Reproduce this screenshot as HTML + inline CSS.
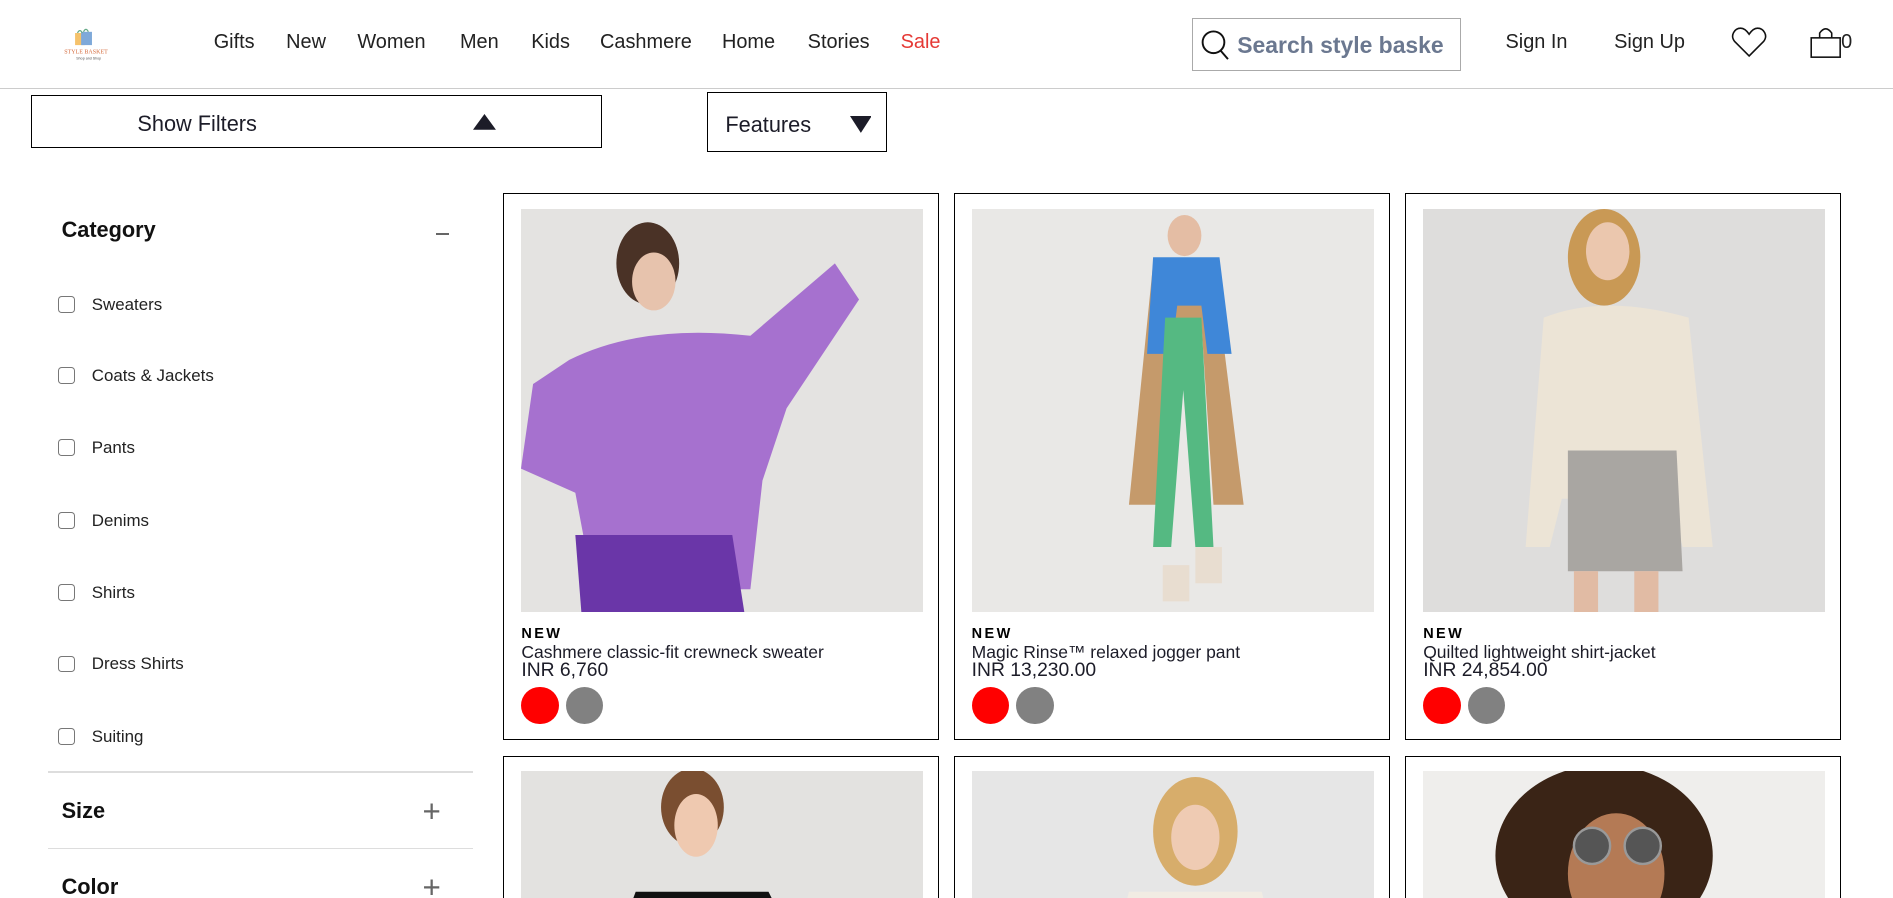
<!DOCTYPE html>
<html><head><meta charset="utf-8"><style>
*{margin:0;padding:0;box-sizing:border-box}
html,body{width:1893px;height:898px;overflow:hidden;background:#fff}
#w{zoom:1.2073;width:1568px;height:744px;position:relative;overflow:hidden;font-family:"Liberation Sans",sans-serif;color:#1c1c28}
.a{position:absolute;white-space:nowrap}
.nav{top:26px;font-size:16.5px;color:#222}
.box{position:absolute;border:1px solid #000}
.cb{position:absolute;left:48px;width:14px;height:14px;border:1px solid #777;border-radius:3px}
.lab{position:absolute;left:76px;font-size:14px;color:#222}
.card{position:absolute;width:361px;border:1px solid #000;background:#fff}
.img{position:absolute;left:14px;top:12px;width:333px;height:334px;background:#e4e3e1;overflow:hidden}
.new{position:absolute;left:14px;top:358px;font-size:12px;font-weight:bold;letter-spacing:2px;color:#000}
.tt{position:absolute;left:14px;top:371px;font-size:14.5px}
.pr{position:absolute;left:14px;top:386px;font-size:16px}
.sw{position:absolute;top:408px;width:31px;height:31px;border-radius:50%}
</style></head><body><div id="w">
<div style="position:absolute;left:0;top:73px;width:1568px;height:1px;background:#ccc"></div>
<svg class="a" style="left:52px;top:22px" width="40" height="32" viewBox="0 0 40 32"><rect x="10" y="5" width="8" height="10" fill="#f5c26b"/><rect x="15" y="4" width="9" height="11" fill="#7fa9d9"/><path d="M12 5q2-4 4 0M17 4q2-4 4 0" stroke="#6a8" fill="none"/><text x="1" y="22" font-size="5" fill="#d4693a" font-family="Liberation Serif">STYLE BASKET</text><text x="11" y="27" font-size="3" fill="#555">Shop and Shop</text></svg>
<div class="a nav" style="left:177px">Gifts</div>
<div class="a nav" style="left:237px">New</div>
<div class="a nav" style="left:296px">Women</div>
<div class="a nav" style="left:381px">Men</div>
<div class="a nav" style="left:440px">Kids</div>
<div class="a nav" style="left:497px">Cashmere</div>
<div class="a nav" style="left:598px">Home</div>
<div class="a nav" style="left:669px">Stories</div>
<div class="a nav" style="left:746px;color:#e53935">Sale</div>
<div class="box" style="left:987px;top:15px;width:223px;height:44px;border-color:#aaa;overflow:hidden">
<svg class="a" style="left:5px;top:8px" width="28" height="28" viewBox="0 0 28 28"><circle cx="12" cy="11" r="9" stroke="#111" stroke-width="1.6" fill="none"/><path d="M18 18l6 7" stroke="#111" stroke-width="1.6"/></svg>
<div class="a" style="left:37px;top:11px;font-size:19px;font-weight:bold;color:#6b7890">Search style baske</div></div>
<div class="a nav" style="left:1247px">Sign In</div>
<div class="a nav" style="left:1337px">Sign Up</div>
<svg class="a" style="left:1434px;top:22px" width="30" height="26" viewBox="0 0 30 26"><path d="M15 24L3 12C-1 7 3 1 8 1c3 0 5 2 7 5 2-3 4-5 7-5 5 0 9 6 5 11z" fill="none" stroke="#111" stroke-width="1.3"/></svg>
<svg class="a" style="left:1499px;top:22px" width="26" height="26" viewBox="0 0 26 26"><rect x="1" y="9" width="24" height="16" fill="none" stroke="#111" stroke-width="1.3"/><path d="M8 9V5q5-7 10 0v4" fill="none" stroke="#111" stroke-width="1.3"/></svg>
<div class="a nav" style="left:1525px">0</div>
<div class="box" style="left:26px;top:79px;width:473px;height:44px"><div class="a" style="left:87px;top:12px;font-size:18px">Show Filters</div><svg class="a" style="left:365px;top:15px" width="19" height="13"><path d="M0 13L9.5 0 19 13z" fill="#1c1c28"/></svg></div>
<div class="box" style="left:586px;top:76px;width:149px;height:50px"><div class="a" style="left:14px;top:16px;font-size:18px">Features</div><svg class="a" style="left:117px;top:19px" width="18" height="14"><path d="M0 0h18L9 14z" fill="#1c1c28"/></svg></div>
<div class="a" style="left:51px;top:180px;font-size:18px;font-weight:bold;color:#111">Category</div>
<div class="a" style="left:361px;top:193px;width:11px;height:2px;background:#666"></div>
<div class="cb" style="top:245px"></div><div class="lab" style="top:244px">Sweaters</div>
<div class="cb" style="top:304px"></div><div class="lab" style="top:303px">Coats &amp; Jackets</div>
<div class="cb" style="top:364px"></div><div class="lab" style="top:363px">Pants</div>
<div class="cb" style="top:424px"></div><div class="lab" style="top:423px">Denims</div>
<div class="cb" style="top:484px"></div><div class="lab" style="top:483px">Shirts</div>
<div class="cb" style="top:543px"></div><div class="lab" style="top:542px">Dress Shirts</div>
<div class="cb" style="top:603px"></div><div class="lab" style="top:602px">Suiting</div>
<div class="a" style="left:40px;top:639px;width:352px;height:1px;background:#ddd"></div>
<div class="a" style="left:51px;top:661px;font-size:18px;font-weight:bold;color:#111">Size</div>
<div class="a" style="left:350px;top:658px;font-size:26px;color:#666">+</div>
<div class="a" style="left:40px;top:702px;width:352px;height:1px;background:#ddd"></div>
<div class="a" style="left:51px;top:724px;font-size:18px;font-weight:bold;color:#111">Color</div>
<div class="a" style="left:350px;top:721px;font-size:26px;color:#666">+</div>

<div class="card" style="left:417px;top:160px;height:453px"><div class="img"><svg width="333" height="334"><ellipse cx="105" cy="45" rx="26" ry="34" fill="#4a3226"/><ellipse cx="110" cy="60" rx="18" ry="24" fill="#e7c3ad"/><path d="M40 125q60-30 150-20l70-60 20 30-60 90-20 60-10 90H60l-15-80-45-20 10-70z" fill="#a671cf"/><path d="M45 270h130l10 64H50z" fill="#6a36a8"/></svg></div>
<div class="new">NEW</div><div class="tt">Cashmere classic-fit crewneck sweater</div><div class="pr">INR 6,760</div><div class="sw" style="left:14px;background:#f00"></div><div class="sw" style="left:51px;background:#818181"></div></div>
<div class="card" style="left:790px;top:160px;height:453px"><div class="img" style="background:#e9e8e6"><svg width="333" height="334"><ellipse cx="176" cy="22" rx="14" ry="17" fill="#e4bda4"/><path d="M150 45h50l25 200h-25l-10-150-20 0-10 150h-30z" fill="#c59a6b"/><path d="M150 40h55l10 80h-20l-5-40-20 0-5 40h-20z" fill="#3f87d8"/><path d="M160 90h30l10 190h-15l-10-130-10 130h-15z" fill="#55b982"/><rect x="158" y="295" width="22" height="30" fill="#e8ddd0"/><rect x="185" y="280" width="22" height="30" fill="#e8ddd0"/></svg></div>
<div class="new">NEW</div><div class="tt">Magic Rinse™ relaxed jogger pant</div><div class="pr">INR 13,230.00</div><div class="sw" style="left:14px;background:#f00"></div><div class="sw" style="left:51px;background:#818181"></div></div>
<div class="card" style="left:1164px;top:160px;height:453px"><div class="img" style="background:#dedddc"><svg width="333" height="334"><ellipse cx="150" cy="40" rx="30" ry="40" fill="#c99955"/><ellipse cx="153" cy="35" rx="18" ry="24" fill="#ebc7ae"/><path d="M100 90q50-20 120 0l20 190h-25l-10-40H115l-10 40H85z" fill="#ece4d6"/><path d="M120 200h90l5 100h-95z" fill="#a9a6a2"/><rect x="125" y="300" width="20" height="34" fill="#e1bba4"/><rect x="175" y="300" width="20" height="34" fill="#e1bba4"/></svg></div>
<div class="new">NEW</div><div class="tt">Quilted lightweight shirt-jacket</div><div class="pr">INR 24,854.00</div><div class="sw" style="left:14px;background:#f00"></div><div class="sw" style="left:51px;background:#818181"></div></div>

<div class="card" style="left:417px;top:626px;height:130px"><div class="img" style="background:#e3e2e0"><svg width="333" height="120"><ellipse cx="142" cy="30" rx="26" ry="32" fill="#7a4e30"/><ellipse cx="145" cy="45" rx="18" ry="26" fill="#efc9b0"/><path d="M95 100h110l20 40H80z" fill="#111"/></svg></div></div>
<div class="card" style="left:790px;top:626px;height:130px"><div class="img" style="background:#e6e6e6"><svg width="333" height="120"><ellipse cx="185" cy="50" rx="35" ry="45" fill="#d7ad6b"/><ellipse cx="185" cy="55" rx="20" ry="27" fill="#efcbb3"/><path d="M130 100h110l10 40H120z" fill="#f1ece3"/></svg></div></div>
<div class="card" style="left:1164px;top:626px;height:130px"><div class="img" style="background:#efeeec"><svg width="333" height="120"><ellipse cx="150" cy="70" rx="90" ry="75" fill="#3a2416"/><ellipse cx="160" cy="85" rx="40" ry="50" fill="#b47a55"/><circle cx="140" cy="62" r="15" fill="#555" stroke="#999" stroke-width="2"/><circle cx="182" cy="62" r="15" fill="#555" stroke="#999" stroke-width="2"/></svg></div></div>
</div></body></html>
